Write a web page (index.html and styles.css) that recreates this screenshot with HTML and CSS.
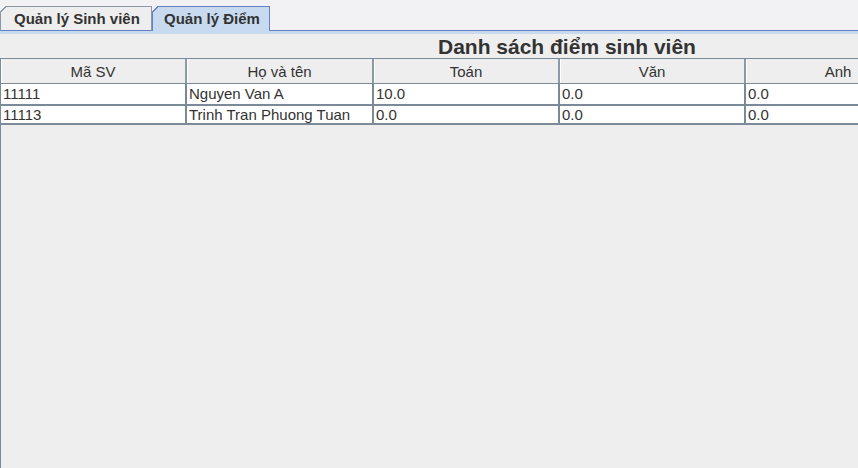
FILE: index.html
```html
<!DOCTYPE html>
<html>
<head>
<meta charset="utf-8">
<link rel="stylesheet" href="styles.css">
</head>
<body>
<div class="tabbar">
  <div class="tab">Quản lý Sinh viên</div>
  <div class="tab selected">Quản lý Điểm</div>
  <div class="tab-fill"></div>
</div>
<div class="strip"></div>
<div class="content">
  <div class="title">Danh sách điểm sinh viên</div>
  <div class="pane">
    <div class="grid">
      <div class="row head">
        <div class="cell">Mã SV</div>
        <div class="cell">Họ và tên</div>
        <div class="cell">Toán</div>
        <div class="cell">Văn</div>
        <div class="cell">Anh</div>
      </div>
      <div class="row">
        <div class="cell">11111</div>
        <div class="cell">Nguyen Van A</div>
        <div class="cell">10.0</div>
        <div class="cell">0.0</div>
        <div class="cell">0.0</div>
      </div>
      <div class="row">
        <div class="cell">11113</div>
        <div class="cell">Trinh Tran Phuong Tuan</div>
        <div class="cell">0.0</div>
        <div class="cell">0.0</div>
        <div class="cell">0.0</div>
      </div>
    </div>
  </div>
</div>
</body>
</html>
```
FILE: styles.css
```css
html, body {
  margin: 0;
  padding: 0;
  height: 100%;
  background: #eeeeee;
  font-family: "Liberation Sans", Arial, sans-serif;
  color: #333333;
  overflow: hidden;
}
.tabbar {
  display: flex;
  align-items: flex-end;
  height: 31px;
  background: #f2f2f4;
}
.tab {
  position: relative;
  box-sizing: border-box;
  height: 25px;
  padding: 0 0 0 13px;
  width: 152px;
  border: 1px solid #8a99a8;
  border-bottom: 1px solid #6382bf;
  background: #eeeeee;
  font-weight: bold;
  font-size: 15px;
  line-height: 23px;
  color: #333333;
  white-space: nowrap;
}
.tab::before {
  content: "";
  position: absolute;
  left: -1px;
  top: -1px;
  width: 6px;
  height: 6px;
  background: linear-gradient(135deg, #f2f2f4 0, #f2f2f4 45%, #8a99a8 45%, #8a99a8 60%, transparent 60%);
}
.tab.selected {
  width: 118px;
  padding-left: 11px;
  border-color: #6382bf;
  border-bottom: none;
  background: #c8daf0;
}
.tab.selected::before {
  background: linear-gradient(135deg, #f2f2f4 0, #f2f2f4 45%, #6382bf 45%, #6382bf 60%, transparent 60%);
}
.tab-fill {
  flex: 1;
  border-bottom: 1px solid #6382bf;
}
.strip {
  height: 3px;
  background: #c8daf0;
}
.content {
  display: flex;
  flex-direction: column;
}
.title {
  height: 24px;
  padding-left: 438px;
  font-size: 21px;
  font-weight: bold;
  line-height: 26px;
  color: #333333;
  white-space: nowrap;
}
.pane {
  height: 410px;
  border-top: 1px solid #7a8a99;
  border-left: 1px solid #7a8a99;
  overflow: hidden;
}
.grid {
  width: 940px;
  border-bottom: 2px solid #7a8a99;
}
.row {
  display: grid;
  grid-template-columns: 186px 187px 186px 186px 186px;
  height: 20px;
  background: #ffffff;
}
.row + .row + .row {
  height: 17px;
  border-top: 2px solid #7a8a99;
}
.row.head {
  height: 24px;
  background: #eeeeee;
  border-bottom: 1px solid #7a8a99;
}
.cell {
  box-sizing: border-box;
  border-right: 2px solid #7a8a99;
  font-size: 15px;
  line-height: 20px;
  padding-left: 2px;
  white-space: nowrap;
  overflow: hidden;
}
.row + .row + .row .cell {
  line-height: 18px;
}
.head .cell {
  text-align: center;
  line-height: 25px;
  padding-left: 0;
  border-right: 2px solid #8a99a8;
  box-shadow: inset 1px 0 0 #ffffff;
}
```
